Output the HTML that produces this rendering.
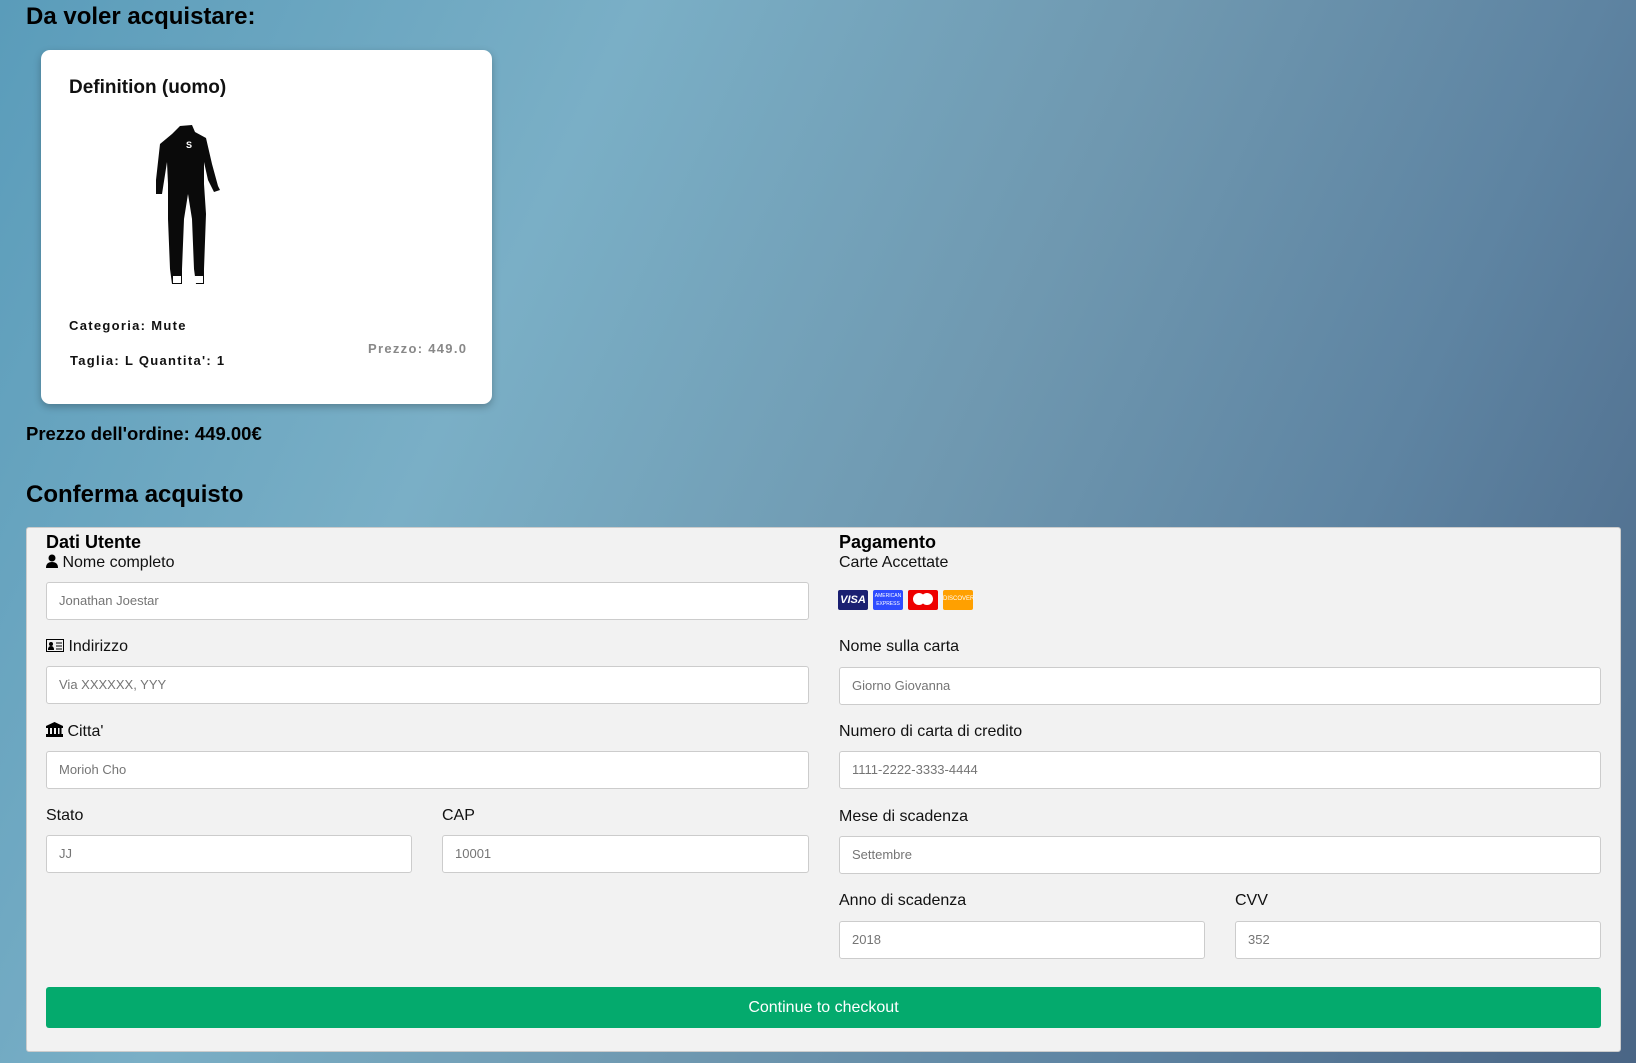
<!DOCTYPE html>
<html><head><meta charset="utf-8"><style>
*{box-sizing:border-box;margin:0;padding:0}
body{width:1636px;height:1063px;overflow:hidden;font-family:"Liberation Sans",Arial,sans-serif;position:relative;
background:linear-gradient(115deg,#5a9cba 0%,#7aafc6 30%,#6f98b0 55%,#5e84a2 75%,#4a6585 100%);}
.a{position:absolute}
h1{position:absolute;font-size:24px;font-weight:bold;color:#000}
.card{left:41px;top:50px;width:451px;height:354px;background:#fff;border-radius:9px;box-shadow:0 3px 8px rgba(0,0,0,.25)}
.sm{font-size:13px;font-weight:bold;letter-spacing:1.3px;color:#111}
.form{left:26px;top:527px;width:1595px;height:525px;background:#f2f2f2;border:1px solid #ccc;border-radius:3px}
.lbl{position:absolute;font-size:16px;color:#111}
.in{position:absolute;height:38px;background:#fff;border:1px solid #ccc;border-radius:3px;font-size:13px;color:#757575;padding-left:12px;line-height:36px}
.btn{position:absolute;left:46px;top:987px;width:1555px;height:41px;background:#04aa6d;color:#fff;font-size:16px;text-align:center;line-height:41px;border-radius:3px}
</style></head><body>
<h1 style="left:26px;top:3px">Da voler acquistare:</h1>
<div class="a card"></div>
<div class="a" style="left:69px;top:77px;font-size:19px;font-weight:bold;color:#111">Definition (uomo)</div>
<svg class="a" style="left:148px;top:124px" width="76" height="164" viewBox="0 0 76 164">
<path d="M32 2 L44 1 L47 8 L58 14 L64 40 L70 62 L72 66 L66 68 L60 56 L56 38 L56 60 L58 90 L56 145 L56 160 L48 160 L46 145 L44 95 L40 70 L36 95 L34 145 L34 160 L24 160 L22 145 L20 95 L20 60 L19 38 L14 70 L8 70 L8 56 L12 20 L24 10 Z" fill="#0a0a0a"/>
<rect x="25" y="152" width="8" height="7" fill="#fff"/><rect x="47" y="152" width="8" height="7" fill="#fff"/>
<text x="38" y="24" font-size="9" fill="#fff" font-weight="bold" font-family="Liberation Sans">S</text>
</svg>
<div class="a sm" style="left:69px;top:318px">Categoria: Mute</div>
<div class="a sm" style="left:70px;top:353px">Taglia: L Quantita': 1</div>
<div class="a sm" style="left:368px;top:341px;color:#888">Prezzo: 449.0</div>
<div class="a" style="left:26px;top:423px;font-size:18.5px;font-weight:bold">Prezzo dell'ordine: 449.00€</div>
<h1 style="left:26px;top:481px">Conferma acquisto</h1>
<div class="a form"></div>
<div class="a" style="left:46px;top:532px;font-size:18px;font-weight:bold">Dati Utente</div>
<div class="lbl" style="left:46px;top:554px"><svg width="12" height="14" viewBox="0 0 12 14" style="vertical-align:-1px"><circle cx="6" cy="4" r="3.5"/><path d="M0 14 Q0 8 6 8 Q12 8 12 14Z"/></svg> Nome completo</div>
<div class="in" style="left:46px;top:582px;width:763px">Jonathan Joestar</div>
<div class="lbl" style="left:46px;top:638px"><svg width="18" height="13" viewBox="0 0 18 13" style="vertical-align:-1px"><rect x=".5" y=".5" width="17" height="12" fill="none" stroke="#000"/><circle cx="5" cy="5" r="2"/><path d="M2 11 Q2 7 5 7 Q8 7 8 11Z"/><path d="M10 4h6M10 7h6M10 10h6" stroke="#000"/></svg> Indirizzo</div>
<div class="in" style="left:46px;top:666px;width:763px">Via XXXXXX, YYY</div>
<div class="lbl" style="left:46px;top:722px"><svg width="17" height="15" viewBox="0 0 17 15" style="vertical-align:-1px"><path d="M8.5 0 L17 4 L0 4Z"/><rect x="0" y="4" width="17" height="2"/><path d="M2 6h2v6H2zM6 6h2v6H6zM10 6h2v6h-2zM13.5 6h2v6h-2z"/><rect x="0" y="12" width="17" height="3"/></svg> Citta'</div>
<div class="in" style="left:46px;top:751px;width:763px">Morioh Cho</div>
<div class="lbl" style="left:46px;top:807px">Stato</div>
<div class="lbl" style="left:442px;top:807px">CAP</div>
<div class="in" style="left:46px;top:835px;width:366px">JJ</div>
<div class="in" style="left:442px;top:835px;width:367px">10001</div>

<div class="a" style="left:839px;top:532px;font-size:18px;font-weight:bold">Pagamento</div>
<div class="lbl" style="left:839px;top:554px">Carte Accettate</div>
<div class="a" style="left:838px;top:590px;width:30px;height:20px;background:#1a1f71;border-radius:2px;color:#fff;font-size:11px;font-weight:bold;font-style:italic;text-align:center;line-height:20px">VISA</div>
<div class="a" style="left:873px;top:590px;width:30px;height:20px;background:#2e4cff;border-radius:2px;color:#fff;font-size:5px;text-align:center;line-height:8px;padding-top:2px">AMERICAN<br>EXPRESS</div>
<div class="a" style="left:908px;top:590px;width:30px;height:20px;background:#ee0000;border-radius:2px"><div class="a" style="left:5px;top:3px;width:12px;height:12px;border-radius:50%;background:#fff"></div><div class="a" style="left:13px;top:3px;width:12px;height:12px;border-radius:50%;background:#fff"></div></div>
<div class="a" style="left:943px;top:590px;width:30px;height:20px;background:#ffa000;border-radius:2px;color:#fff;font-size:6px;line-height:18px;text-align:center">DISCOVER</div>
<div class="lbl" style="left:839px;top:638px">Nome sulla carta</div>
<div class="in" style="left:839px;top:667px;width:762px">Giorno Giovanna</div>
<div class="lbl" style="left:839px;top:723px">Numero di carta di credito</div>
<div class="in" style="left:839px;top:751px;width:762px">1111-2222-3333-4444</div>
<div class="lbl" style="left:839px;top:808px">Mese di scadenza</div>
<div class="in" style="left:839px;top:836px;width:762px">Settembre</div>
<div class="lbl" style="left:839px;top:892px">Anno di scadenza</div>
<div class="lbl" style="left:1235px;top:892px">CVV</div>
<div class="in" style="left:839px;top:921px;width:366px">2018</div>
<div class="in" style="left:1235px;top:921px;width:366px">352</div>
<div class="btn">Continue to checkout</div>
</body></html>
